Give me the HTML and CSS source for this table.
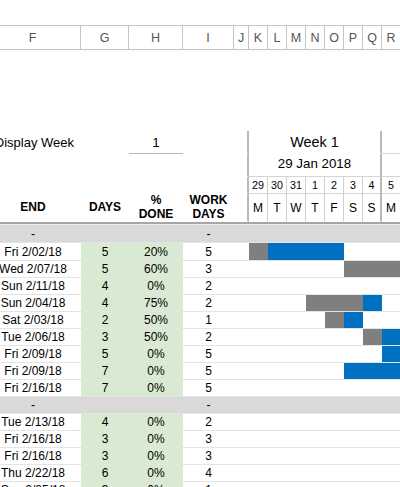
FILE: index.html
```html
<!DOCTYPE html>
<html>
<head>
<meta charset="utf-8">
<link rel="stylesheet" href="styles.css">
</head>
<body>
<div class="sheet">
  <div class="top-gap"></div>

  <div class="row colhead">
    <div class="c">F</div><div class="c">G</div><div class="c">H</div><div class="c">I</div>
    <div class="c">J</div><div class="c">K</div><div class="c">L</div><div class="c">M</div>
    <div class="c">N</div><div class="c">O</div><div class="c">P</div><div class="c">Q</div>
    <div class="c">R</div>
  </div>

  <div class="mid-gap"></div>

  <div class="row hrow dw">
    <div class="c dw-label">Display Week</div>
    <div class="c"></div>
    <div class="c dw-val">1</div>
    <div class="c"></div>
    <div class="c jsep"></div>
    <div class="c wk wk-title">Week 1</div>
    <div class="c rcol under"></div>
  </div>

  <div class="row hrow dt">
    <div class="c"></div><div class="c"></div><div class="c"></div><div class="c"></div>
    <div class="c jsep"></div>
    <div class="c wk wk-date under">29 Jan 2018</div>
    <div class="c rcol under"></div>
  </div>

  <div class="row hrow dn">
    <div class="c"></div><div class="c"></div><div class="c"></div><div class="c"></div>
    <div class="c jsep"></div>
    <div class="c d">29</div><div class="c d">30</div><div class="c d">31</div><div class="c d">1</div>
    <div class="c d">2</div><div class="c d">3</div><div class="c d last">4</div>
    <div class="c d">5</div>
  </div>

  <div class="row hrow dl">
    <div class="c lbl">END</div>
    <div class="c lbl">DAYS</div>
    <div class="c lbl">%<br>DONE</div>
    <div class="c lbl">WORK<br>DAYS</div>
    <div class="c jsep"></div>
    <div class="c d">M</div><div class="c d">T</div><div class="c d">W</div><div class="c d">T</div>
    <div class="c d">F</div><div class="c d">S</div><div class="c d last">S</div>
    <div class="c d">M</div>
  </div>

  <div class="row section first-section">
    <div class="c">-</div><div class="c"></div><div class="c"></div><div class="c">-</div>
  </div>

  <div class="row data tall">
    <div class="c">Fri 2/02/18</div><div class="c grn">5</div><div class="c grn">20%</div><div class="c">5</div>
    <div class="c"></div>
    <div class="c gb"></div><div class="c bb"></div><div class="c bb"></div><div class="c bb"></div><div class="c bb"></div><div class="c"></div><div class="c"></div><div class="c"></div>
  </div>
  <div class="row data">
    <div class="c">Wed 2/07/18</div><div class="c grn">5</div><div class="c grn">60%</div><div class="c">3</div>
    <div class="c"></div>
    <div class="c"></div><div class="c"></div><div class="c"></div><div class="c"></div><div class="c"></div><div class="c gb"></div><div class="c gb"></div><div class="c gb"></div>
  </div>
  <div class="row data">
    <div class="c">Sun 2/11/18</div><div class="c grn">4</div><div class="c grn">0%</div><div class="c">2</div>
    <div class="c"></div>
    <div class="c"></div><div class="c"></div><div class="c"></div><div class="c"></div><div class="c"></div><div class="c"></div><div class="c"></div><div class="c"></div>
  </div>
  <div class="row data">
    <div class="c">Sun 2/04/18</div><div class="c grn">4</div><div class="c grn">75%</div><div class="c">2</div>
    <div class="c"></div>
    <div class="c"></div><div class="c"></div><div class="c"></div><div class="c gb"></div><div class="c gb"></div><div class="c gb"></div><div class="c bb"></div><div class="c"></div>
  </div>
  <div class="row data">
    <div class="c">Sat 2/03/18</div><div class="c grn">2</div><div class="c grn">50%</div><div class="c">1</div>
    <div class="c"></div>
    <div class="c"></div><div class="c"></div><div class="c"></div><div class="c"></div><div class="c gb"></div><div class="c bb"></div><div class="c"></div><div class="c"></div>
  </div>
  <div class="row data">
    <div class="c">Tue 2/06/18</div><div class="c grn">3</div><div class="c grn">50%</div><div class="c">2</div>
    <div class="c"></div>
    <div class="c"></div><div class="c"></div><div class="c"></div><div class="c"></div><div class="c"></div><div class="c"></div><div class="c gb"></div><div class="c bb"></div>
  </div>
  <div class="row data">
    <div class="c">Fri 2/09/18</div><div class="c grn">5</div><div class="c grn">0%</div><div class="c">5</div>
    <div class="c"></div>
    <div class="c"></div><div class="c"></div><div class="c"></div><div class="c"></div><div class="c"></div><div class="c"></div><div class="c"></div><div class="c bb"></div>
  </div>
  <div class="row data">
    <div class="c">Fri 2/09/18</div><div class="c grn">7</div><div class="c grn">0%</div><div class="c">5</div>
    <div class="c"></div>
    <div class="c"></div><div class="c"></div><div class="c"></div><div class="c"></div><div class="c"></div><div class="c bb"></div><div class="c bb"></div><div class="c bb"></div>
  </div>
  <div class="row data">
    <div class="c">Fri 2/16/18</div><div class="c grn">7</div><div class="c grn">0%</div><div class="c">5</div>
    <div class="c"></div>
    <div class="c"></div><div class="c"></div><div class="c"></div><div class="c"></div><div class="c"></div><div class="c"></div><div class="c"></div><div class="c"></div>
  </div>

  <div class="row section">
    <div class="c">-</div><div class="c"></div><div class="c"></div><div class="c">-</div>
  </div>

  <div class="row data">
    <div class="c">Tue 2/13/18</div><div class="c grn">4</div><div class="c grn">0%</div><div class="c">2</div>
    <div class="c"></div>
    <div class="c"></div><div class="c"></div><div class="c"></div><div class="c"></div><div class="c"></div><div class="c"></div><div class="c"></div><div class="c"></div>
  </div>
  <div class="row data">
    <div class="c">Fri 2/16/18</div><div class="c grn">3</div><div class="c grn">0%</div><div class="c">3</div>
    <div class="c"></div>
    <div class="c"></div><div class="c"></div><div class="c"></div><div class="c"></div><div class="c"></div><div class="c"></div><div class="c"></div><div class="c"></div>
  </div>
  <div class="row data">
    <div class="c">Fri 2/16/18</div><div class="c grn">3</div><div class="c grn">0%</div><div class="c">3</div>
    <div class="c"></div>
    <div class="c"></div><div class="c"></div><div class="c"></div><div class="c"></div><div class="c"></div><div class="c"></div><div class="c"></div><div class="c"></div>
  </div>
  <div class="row data">
    <div class="c">Thu 2/22/18</div><div class="c grn">6</div><div class="c grn">0%</div><div class="c">4</div>
    <div class="c"></div>
    <div class="c"></div><div class="c"></div><div class="c"></div><div class="c"></div><div class="c"></div><div class="c"></div><div class="c"></div><div class="c"></div>
  </div>
  <div class="row data">
    <div class="c">Sun 2/25/18</div><div class="c grn">3</div><div class="c grn">0%</div><div class="c">1</div>
    <div class="c"></div>
    <div class="c"></div><div class="c"></div><div class="c"></div><div class="c"></div><div class="c"></div><div class="c"></div><div class="c"></div><div class="c"></div>
  </div>
</div>
</body>
</html>
```
FILE: styles.css
```css
* {
  box-sizing: border-box;
  margin: 0;
  padding: 0;
}

html,
body {
  width: 400px;
  height: 487px;
  overflow: hidden;
  background: #ffffff;
}

body {
  font-family: "Liberation Sans", Arial, sans-serif;
  color: #000000;
}

.sheet {
  margin-left: -15px;
  width: 440px;
}

.row {
  display: grid;
  grid-template-columns: 96px 48px 54px 51px 15px repeat(8, 19px) 1fr;
}

.c {
  display: flex;
  align-items: center;
  justify-content: center;
  white-space: nowrap;
  overflow: visible;
}

.top-gap {
  height: 25px;
}

.mid-gap {
  height: 81px;
}

/* column letters bar */
.colhead {
  height: 25px;
  border-top: 1px solid #c4c4c4;
  border-bottom: 1px solid #c4c4c4;
}

.colhead .c {
  border-right: 1px solid #c4c4c4;
  font-size: 12.5px;
  color: #555555;
}

/* header rows */
.hrow .c {
  border-bottom: 1px solid transparent;
}

.jsep {
  border-right: 2px solid #b9b9b9;
}

.wk {
  grid-column: span 7;
  border-right: 2px solid #b9b9b9;
}

.dw {
  height: 23px;
}

.dw-label {
  justify-content: flex-end;
  padding-right: 7px;
  font-size: 13px;
}

.dw-val {
  font-size: 13.33px;
  border-bottom: 1px solid #b9b9b9 !important;
}

.wk-title {
  font-size: 14.4px;
}

.hrow .under {
  border-bottom: 1px solid #d4d4d4;
}

.hrow .rcol {
  grid-column: span 2;
}

.dt {
  height: 23px;
}

.wk-date {
  font-size: 13.33px;
  padding-bottom: 3px;
}

.dn {
  height: 17px;
}

.dn .d {
  font-size: 10.7px;
  border-right: 1px solid #cfcfcf;
  border-bottom: 1px solid #d4d4d4;
}

.hrow .d.last {
  border-right: 2px solid #b9b9b9;
}

.dl {
  height: 30px;
  border-bottom: 2px solid #a6a6a6;
}

.dl .d {
  font-size: 12px;
  border-right: 1px solid #cfcfcf;
}

.lbl {
  font-size: 12px;
  font-weight: bold;
  text-align: center;
  line-height: 13.5px;
}

/* section rows */
.section {
  height: 17px;
  background: #d9d9d9;
  border-bottom: 1px solid #e4e4e4;
  font-size: 12px;
}

.first-section {
  height: 19px;
  border-top: 1px solid #ececec;
}

/* data rows */
.data {
  height: 17px;
  font-size: 12px;
}

.data.tall {
  height: 18px;
}

.data .c {
  border-bottom: 1px solid #e4e4e4;
}

.grn {
  background: #d9ead3;
}

.gb {
  background: #7f7f7f;
}

.bb {
  background: #0070c0;
}
```
